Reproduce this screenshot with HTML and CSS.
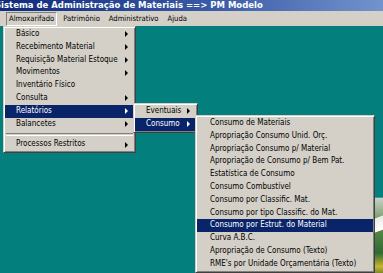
FILE: index.html
```html
<!DOCTYPE html>
<html>
<head>
    <meta charset="UTF-8">
    <title>Sistema de Administração de Materiais</title>
    <link rel="stylesheet" href="styles.css">
</head>
<body>
    <div class="window">
        <div class="titlebar"><span class="title">Sistema de Administração de Materiais ==&gt; PM Modelo</span></div>
        <div class="menubar">
            <span class="menubar-item pressed">Almoxarifado</span>
            <span class="menubar-item">Patrimônio</span>
            <span class="menubar-item">Administrativo</span>
            <span class="menubar-item">Ajuda</span>
        </div>
        <div class="desktop">
            <div class="picture"></div>

            <div class="menu menu-main">
                <div class="item sub">Básico</div>
                <div class="item sub">Recebimento Material</div>
                <div class="item sub">Requisição Material Estoque</div>
                <div class="item sub">Movimentos</div>
                <div class="item">Inventário Físico</div>
                <div class="item sub">Consulta</div>
                <div class="item sub active">Relatórios</div>
                <div class="item sub">Balancetes</div>
                <div class="separator"></div>
                <div class="item sub">Processos Restritos</div>
            </div>

            <div class="menu menu-reports">
                <div class="item sub">Eventuais</div>
                <div class="item sub active">Consumo</div>
            </div>

            <div class="menu menu-consumo">
                <div class="item">Consumo de Materiais</div>
                <div class="item">Apropriação Consumo Unid. Orç.</div>
                <div class="item">Apropriação Consumo p/ Material</div>
                <div class="item">Apropriação de Consumo p/ Bem Pat.</div>
                <div class="item">Estatística de Consumo</div>
                <div class="item">Consumo Combustível</div>
                <div class="item">Consumo por Classific. Mat.</div>
                <div class="item">Consumo por tipo Classific. do Mat.</div>
                <div class="item active">Consumo por Estrut. do Material</div>
                <div class="item">Curva A.B.C.</div>
                <div class="item">Apropriação de Consumo (Texto)</div>
                <div class="item">RME's por Unidade Orçamentária (Texto)</div>
            </div>
        </div>
    </div>
</body>
</html>
```

FILE: styles.css
```css
body {
    margin: 0;
    font-family: "DejaVu Sans Condensed", "Liberation Sans", sans-serif;
    font-size: 8px;
    color: #000;
}
.window {
    width: 383px;
    height: 273px;
    overflow: hidden;
    display: flex;
    flex-direction: column;
}
.titlebar {
    height: 11px;
    background: linear-gradient(to right, #0e2b7a, #3a5aa6 55%, #7393cd);
    color: #fff;
    font-family: "DejaVu Sans", sans-serif;
    font-weight: bold;
    font-size: 8.5px;
    line-height: 11px;
    white-space: nowrap;
    overflow: hidden;
}
.title {
    display: inline-block;
    margin-left: -5px;
}
.menubar {
    height: 15px;
    background-color: #d4d0c8;
    display: flex;
    align-items: center;
    padding-left: 6px;
    font-size: 7.6px;
}
.menubar-item {
    padding: 0 2px;
    margin-right: 3px;
    height: 12px;
    line-height: 12px;
    border: 1px solid transparent;
}
.menubar-item.pressed {
    border-color: #808080 #fff #fff #808080;
}
.desktop {
    flex: 1;
    position: relative;
    background-color: #037f7e;
}
.picture {
    position: absolute;
    left: 374px;
    top: 164px;
    width: 12px;
    height: 90px;
    background:
        linear-gradient(160deg, transparent 30%, #e8ece4 31%, #ffffff 45%, transparent 46%),
        linear-gradient(to bottom, #037f7e 0, #037f7e 8%, #c9d1c8 9%, #5d8b4c 40%, #2f6a32 70%, #c8b430 85%, #2b5a2a 100%);
}
.menu {
    position: absolute;
    background-color: #d4d0c8;
    border: 1px solid;
    border-color: #d4d0c8 #404040 #404040 #d4d0c8;
    box-shadow: inset 1px 1px #fff, inset -1px -1px #808080;
    padding: 1px;
}
.menu-main {
    left: 3px;
    top: 0;
    width: 129px;
}
.menu-reports {
    left: 133px;
    top: 77px;
    width: 61px;
}
.menu-consumo {
    left: 195px;
    top: 89px;
    width: 176px;
}
.item {
    height: 12.8px;
    line-height: 12.8px;
    padding: 0 6px 0 11px;
    display: flex;
    align-items: center;
    white-space: nowrap;
}
.menu-consumo .item {
    padding-left: 13px;
}
.item.sub::after {
    content: "";
    margin-left: auto;
    border-left: 3px solid #000;
    border-top: 3px solid transparent;
    border-bottom: 3px solid transparent;
}
.item.active {
    background-color: #0a246a;
    color: #fff;
}
.item.active.sub::after {
    border-left-color: #fff;
}
.separator {
    height: 1px;
    margin: 3px 1px 2px;
    border-top: 1px solid #808080;
    border-bottom: 1px solid #fff;
}
```
